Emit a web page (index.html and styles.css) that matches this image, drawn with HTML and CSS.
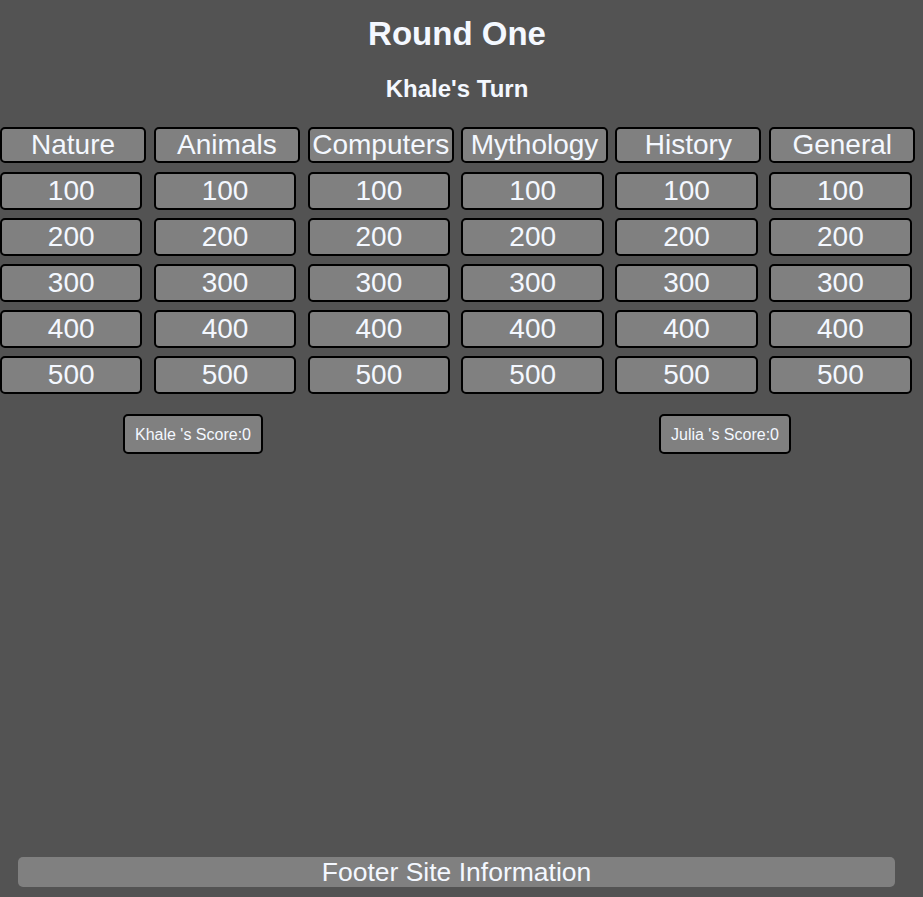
FILE: index.html
```html
<!DOCTYPE html>
<html lang="en">
<head>
<meta charset="utf-8">
<title>Jeopardy</title>
<link rel="stylesheet" href="styles.css">
</head>
<body>
<main class="page">
  <h1 class="round-title">Round One</h1>
  <h2 class="turn">Khale's Turn</h2>
  <section class="board">
    <div class="column">
      <button class="category">Nature</button>
      <button class="value">100</button>
      <button class="value">200</button>
      <button class="value">300</button>
      <button class="value">400</button>
      <button class="value">500</button>
    </div>
    <div class="column">
      <button class="category">Animals</button>
      <button class="value">100</button>
      <button class="value">200</button>
      <button class="value">300</button>
      <button class="value">400</button>
      <button class="value">500</button>
    </div>
    <div class="column">
      <button class="category">Computers</button>
      <button class="value">100</button>
      <button class="value">200</button>
      <button class="value">300</button>
      <button class="value">400</button>
      <button class="value">500</button>
    </div>
    <div class="column">
      <button class="category">Mythology</button>
      <button class="value">100</button>
      <button class="value">200</button>
      <button class="value">300</button>
      <button class="value">400</button>
      <button class="value">500</button>
    </div>
    <div class="column">
      <button class="category">History</button>
      <button class="value">100</button>
      <button class="value">200</button>
      <button class="value">300</button>
      <button class="value">400</button>
      <button class="value">500</button>
    </div>
    <div class="column">
      <button class="category">General</button>
      <button class="value">100</button>
      <button class="value">200</button>
      <button class="value">300</button>
      <button class="value">400</button>
      <button class="value">500</button>
    </div>
  </section>
  <section class="scores">
    <button class="score">Khale 's Score:0</button>
    <button class="score">Julia 's Score:0</button>
  </section>
</main>
<footer class="footer">Footer Site Information</footer>
</body>
</html>
```
FILE: styles.css
```css
* {
  box-sizing: border-box;
}

html, body {
  margin: 0;
  padding: 0;
}

body {
  background: #535353;
  color: #f4f8ff;
  font-family: "Liberation Sans", Arial, sans-serif;
  min-height: 100vh;
  display: flex;
  flex-direction: column;
}

.page {
  display: flex;
  flex-direction: column;
}

.round-title {
  margin: 15px 0 0;
  padding-right: 9px;
  font-size: 33px;
  font-weight: bold;
  text-align: center;
  line-height: 37px;
}

.turn {
  margin: 24px 0 0;
  padding-right: 9px;
  font-size: 24px;
  font-weight: bold;
  text-align: center;
  line-height: 26px;
}

.board {
  margin-top: 25px;
  display: grid;
  grid-template-columns: repeat(6, 1fr);
}

.column {
  display: flex;
  flex-direction: column;
  align-items: flex-start;
  gap: 8px;
}

button {
  font-family: "Liberation Sans", Arial, sans-serif;
  background: #808080;
  color: #f4f8ff;
  border: 2px solid #000;
  border-radius: 5px;
  margin: 0;
}

.category {
  width: 95%;
  height: 36px;
  padding: 0;
  font-size: 28px;
  line-height: 32px;
  margin-bottom: 1px;
  white-space: nowrap;
}

.value {
  width: calc(90% + 4px);
  height: 38px;
  padding: 0;
  font-size: 28px;
  line-height: 32px;
}

.scores {
  display: flex;
  margin-top: 20px;
  padding-left: 123px;
  gap: 396px;
}

.score {
  font-size: 16px;
  line-height: 18px;
  padding: 10px 10px 8px;
  height: 40px;
  white-space: nowrap;
}

.footer {
  margin-top: auto;
  margin-bottom: 10px;
  margin-left: 18px;
  width: 877px;
  height: 30px;
  background: #808080;
  border-radius: 5px;
  font-size: 26.5px;
  line-height: 30px;
  text-align: center;
}
```
